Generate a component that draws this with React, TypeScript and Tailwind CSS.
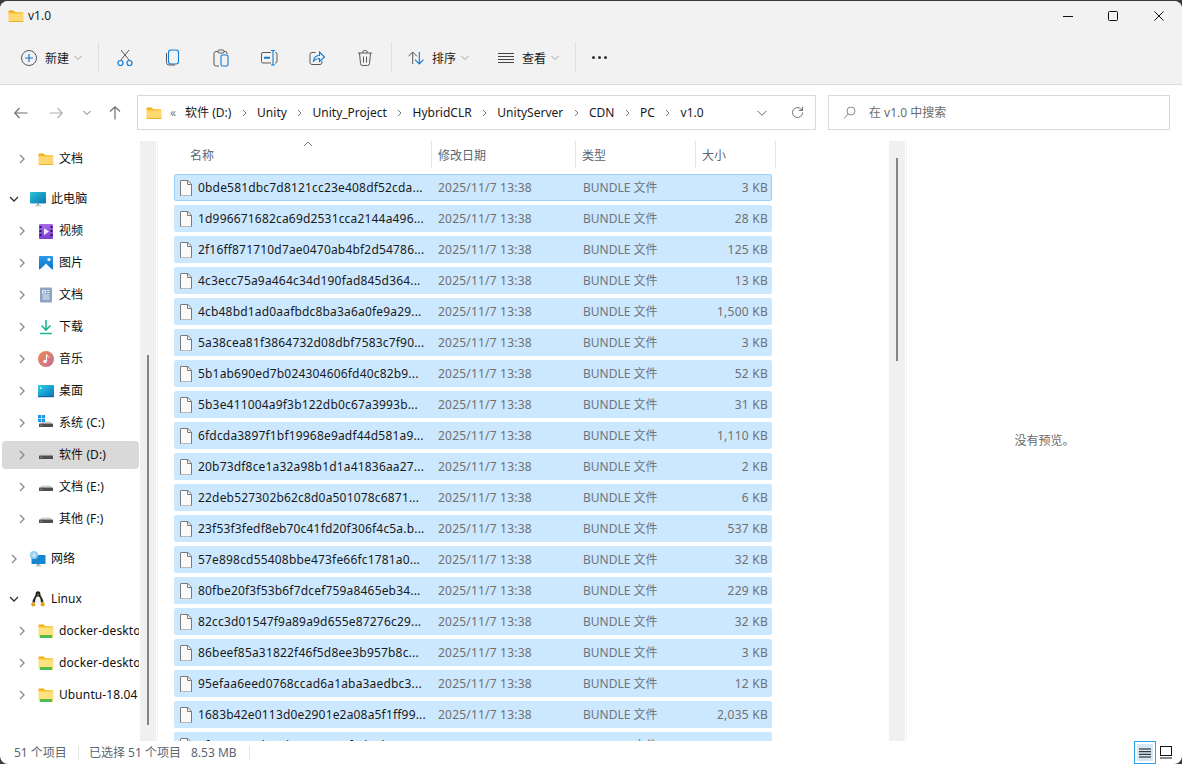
import { ReactNode } from 'react'

// file list rows
const files = [
  ['0bde581dbc7d8121cc23e408df52cda...', '3 KB'],
  ['1d996671682ca69d2531cca2144a496...', '28 KB'],
  ['2f16ff871710d7ae0470ab4bf2d54786...', '125 KB'],
  ['4c3ecc75a9a464c34d190fad845d364...', '13 KB'],
  ['4cb48bd1ad0aafbdc8ba3a6a0fe9a29...', '1,500 KB'],
  ['5a38cea81f3864732d08dbf7583c7f90...', '3 KB'],
  ['5b1ab690ed7b024304606fd40c82b9...', '52 KB'],
  ['5b3e411004a9f3b122db0c67a3993b...', '31 KB'],
  ['6fdcda3897f1bf19968e9adf44d581a9...', '1,110 KB'],
  ['20b73df8ce1a32a98b1d1a41836aa27...', '2 KB'],
  ['22deb527302b62c8d0a501078c6871...', '6 KB'],
  ['23f53f3fedf8eb70c41fd20f306f4c5a.b...', '537 KB'],
  ['57e898cd55408bbe473fe66fc1781a0...', '32 KB'],
  ['80fbe20f3f53b6f7dcef759a8465eb34...', '229 KB'],
  ['82cc3d01547f9a89a9d655e87276c29...', '32 KB'],
  ['86beef85a31822f46f5d8ee3b957b8c...', '3 KB'],
  ['95efaa6eed0768ccad6a1aba3aedbc3...', '12 KB'],
  ['1683b42e0113d0e2901e2a08a5f1ff99...', '2,035 KB'],
  ['1f4a90c27d3e5b16a8c04ef7d92b3c1...', '48 KB'],
]

const crumbs = ['软件 (D:)', 'Unity', 'Unity_Project', 'HybridCLR', 'UnityServer', 'CDN', 'PC', 'v1.0']

function FolderIcon({ size = 16 }: { size?: number }) {
  return (
    <svg width={size} height={size} viewBox="0 0 16 16" className="shrink-0">
      <path d="M0.500 3.500a1 1 0 0 1 1-1h4l1.600 1.500h-6.600z" fill="#f0a90f" />
      <path d="M0.500 4.500h14a1 1 0 0 1 1 1v7.500a1 1 0 0 1-1 1h-13a1 1 0 0 1-1-1z" fill="#fdd871" />
      <path d="M0.500 13h15v0.200a1 1 0 0 1-1 0.800h-13a1 1 0 0 1-1-1z" fill="#eeb02c" />
      <path d="M0.500 4h6.600l8 0.600v1h-14.600z" fill="#f8bd2d" />
    </svg>
  )
}

function WslFolderIcon() {
  return (
    <svg width="16" height="16" viewBox="0 0 16 16" className="shrink-0">
      <path d="M0.500 2.500a1 1 0 0 1 1-1h4l1.600 1.500h-6.600z" fill="#f0a90f" />
      <path d="M0.500 3.500h14a1 1 0 0 1 1 1v9.500a1 1 0 0 1-1 1h-13a1 1 0 0 1-1-1z" fill="#fde27f" />
      <path d="M0.500 3h6.600l8 0.600v1h-14.600z" fill="#f8bd2d" />
      <rect x="2" y="12" width="12" height="3" fill="#4fbf4a" />
    </svg>
  )
}

function NavChevron({ open }: { open?: boolean }) {
  return (
    <svg width="10" height="10" viewBox="0 0 10 10" className="shrink-0">
      {open ? (
        <path d="M1 3l4 4 4-4" fill="none" stroke="#333" strokeWidth="1.300" />
      ) : (
        <path d="M3 1l4 4-4 4" fill="none" stroke="#8a8a8a" strokeWidth="1.300" />
      )}
    </svg>
  )
}

function DownCaret({ color = '#a0a0a0' }: { color?: string }) {
  return (
    <svg width="8" height="6" viewBox="0 0 8 6" className="shrink-0">
      <path d="M0.500 1l3.500 3.500 3.500-3.500" fill="none" stroke={color} strokeWidth="1" />
    </svg>
  )
}

function DriveIcon({ windows }: { windows?: boolean }) {
  return (
    <svg width="16" height="16" viewBox="0 0 16 16" className="shrink-0">
      <path d="M2 8.500l1.500-2h9l1.500 2z" fill="#d0d0d0" />
      <rect x="1" y="8.500" width="14" height="3.500" rx="0.500" fill="#4e4e4e" />
      <rect x="2.500" y="9.800" width="1.500" height="1" fill="#5be05b" />
      {windows && (
        <g fill="#1b93e8">
          <rect x="0" y="0" width="3.200" height="3.200" />
          <rect x="3.800" y="0" width="3.200" height="3.200" />
          <rect x="0" y="3.800" width="3.200" height="3.200" />
          <rect x="3.800" y="3.800" width="3.200" height="3.200" />
        </g>
      )}
    </svg>
  )
}

function VideoIcon() {
  return (
    <svg width="16" height="16" viewBox="0 0 16 16" className="shrink-0">
      <defs>
        <linearGradient id="vid" x1="0" y1="0" x2="0" y2="1">
          <stop offset="0" stopColor="#a767e8" />
          <stop offset="1" stopColor="#7a3fd0" />
        </linearGradient>
      </defs>
      <rect x="1" y="1" width="14" height="15" rx="1" fill="url(#vid)" />
      <rect x="1.500" y="3" width="2" height="2" fill="#2c1466" />
      <rect x="1.500" y="7" width="2" height="2" fill="#2c1466" />
      <rect x="1.500" y="11" width="2" height="2" fill="#2c1466" />
      <rect x="12.500" y="3" width="2" height="2" fill="#2c1466" />
      <rect x="12.500" y="7" width="2" height="2" fill="#2c1466" />
      <rect x="12.500" y="11" width="2" height="2" fill="#2c1466" />
      <path d="M6 5l5 3.500-5 3.500z" fill="#f1e6ff" />
    </svg>
  )
}

function PictureIcon() {
  return (
    <svg width="16" height="16" viewBox="0 0 16 16" className="shrink-0">
      <defs>
        <linearGradient id="pic" x1="0" y1="0" x2="0" y2="1">
          <stop offset="0" stopColor="#2b9bea" />
          <stop offset="1" stopColor="#0b6fc4" />
        </linearGradient>
      </defs>
      <rect x="1" y="1" width="14" height="14" rx="1" fill="url(#pic)" />
      <circle cx="11" cy="4.500" r="1.600" fill="#fff" />
      <path d="M1 15l4-3.500 3-3 3 3 4 3.500z" fill="#f2f8fd" />
    </svg>
  )
}

function DocIcon() {
  return (
    <svg width="16" height="16" viewBox="0 0 16 16" className="shrink-0">
      <rect x="2" y="0.500" width="12" height="15" rx="1" fill="#8ba4c4" />
      <path d="M4.500 3.500h3v2.500h-3zM9 3.500h2.500M9 5.500h2.500M4.500 8h7M4.500 10h7M4.500 12h7" stroke="#fff" fill="none" strokeWidth="0.800" />
    </svg>
  )
}

function DownloadIcon() {
  return (
    <svg width="16" height="16" viewBox="0 0 16 16" className="shrink-0">
      <path d="M8 1v9M3.500 6.500l4.500 4.500 4.500-4.500" fill="none" stroke="#1fb58f" strokeWidth="1.600" />
      <path d="M2 14.500h12" stroke="#1fb58f" strokeWidth="1.600" />
    </svg>
  )
}

function MusicIcon() {
  return (
    <svg width="16" height="16" viewBox="0 0 16 16" className="shrink-0">
      <defs>
        <linearGradient id="mus" x1="0" y1="0" x2="1" y2="1">
          <stop offset="0" stopColor="#ee8a4f" />
          <stop offset="1" stopColor="#c66a9a" />
        </linearGradient>
      </defs>
      <circle cx="8" cy="8" r="8" fill="url(#mus)" />
      <path d="M8.500 3.500v6.500" stroke="#fff" strokeWidth="1.200" />
      <path d="M8.500 3.500c0.500 1.500 2 1.800 2.500 3" stroke="#fff" strokeWidth="1" fill="none" />
      <circle cx="7" cy="10.500" r="1.800" fill="#fff" />
    </svg>
  )
}

function DesktopIcon() {
  return (
    <svg width="16" height="16" viewBox="0 0 16 16" className="shrink-0">
      <defs>
        <linearGradient id="desk" x1="0" y1="0" x2="1" y2="1">
          <stop offset="0" stopColor="#2ad0e0" />
          <stop offset="1" stopColor="#0a74c4" />
        </linearGradient>
      </defs>
      <rect x="0" y="2" width="16" height="12" rx="1" fill="url(#desk)" />
      <rect x="2" y="4.500" width="1.500" height="1.500" fill="#fff" />
      <rect x="0" y="13" width="16" height="1.200" fill="#155d94" />
    </svg>
  )
}

function PcIcon() {
  return (
    <svg width="16" height="16" viewBox="0 0 16 16" className="shrink-0">
      <defs>
        <linearGradient id="pc" x1="0" y1="0" x2="1" y2="1">
          <stop offset="0" stopColor="#2ac3d8" />
          <stop offset="1" stopColor="#0c74b8" />
        </linearGradient>
      </defs>
      <rect x="0" y="1" width="16" height="11.500" rx="1" fill="url(#pc)" />
      <rect x="7" y="12.500" width="2" height="1.800" fill="#9a9a9a" />
      <rect x="5" y="14.300" width="6" height="1" fill="#b8b8b8" />
    </svg>
  )
}

function NetworkIcon() {
  return (
    <svg width="16" height="16" viewBox="0 0 16 16" className="shrink-0">
      <rect x="1.500" y="4" width="14" height="9" rx="0.800" fill="#1686d0" />
      <rect x="7" y="13" width="2.500" height="1.500" fill="#9a9a9a" />
      <rect x="5.500" y="14.500" width="5.500" height="1" fill="#b8b8b8" />
      <circle cx="4" cy="4" r="4" fill="#8cc7ee" />
      <path d="M1 4h6M4 0.500v7M2 1.500c1.500 1.500 2.500 3 0 5M6 1.500c-1.500 1.500-2.500 3 0 5" stroke="#f4fbff" strokeWidth="0.500" fill="none" />
    </svg>
  )
}

function TuxIcon() {
  return (
    <svg width="16" height="16" viewBox="0 0 16 16" className="shrink-0">
      <path d="M8 0.200c-1.900 0-2.500 1.500-2.400 3.200 0 1.500-3 4.200-3.200 8.100h11.200c-0.200-3.900-3.200-6.600-3.200-8.100 0.100-1.700-0.500-3.200-2.400-3.200z" fill="#222" />
      <path d="M8 5.200c-1.700 0-2.900 3-2.900 5.800 0 1.300 1.300 2.200 2.900 2.200s2.900-0.900 2.900-2.200c0-2.800-1.200-5.800-2.900-5.800z" fill="#f6f6f6" />
      <path d="M6.800 3.300h2.400l-1.200 1.300z" fill="#e8a317" />
      <path d="M0.800 13.200l3-2.700 2 3.700-3.200 1.600zM15.200 13.200l-3-2.700-2 3.700 3.200 1.600z" fill="#dda11f" />
    </svg>
  )
}

function FileIcon() {
  return (
    <svg width="12" height="16" viewBox="0 0 12 16" className="shrink-0">
      <path d="M0.500 1a0.500 0.500 0 0 1 0.500-0.500h6.800l3.700 3.700v11.300a0.500 0.500 0 0 1-0.500 0.500h-10a0.500 0.500 0 0 1-0.500-0.500z" fill="#fafafa" stroke="#7a7a7a" strokeWidth="1" />
      <path d="M7.500 0.500v4h4" fill="none" stroke="#7a7a7a" strokeWidth="1" />
    </svg>
  )
}

function ToolIcon({ children }: { children: ReactNode }) {
  return (
    <svg width="20" height="20" viewBox="0 0 20 20" fill="none" className="shrink-0">
      {children}
    </svg>
  )
}

const blue = '#0f7ad4'
const ink = '#5a5a5a'

function NavRow({ level, open, selected, icon, label }: { level: 0 | 1; open?: boolean; selected?: boolean; icon: ReactNode; label: string }) {
  return (
    <div className={`flex h-7 w-[137px] shrink-0 ml-[2px] items-center rounded overflow-hidden ${selected ? 'bg-[#d9d9d9]' : ''} ${level === 1 ? 'pl-[15px]' : 'pl-[7px]'}`}>
      <NavChevron open={open} />
      <span className="ml-[11px] flex w-4 shrink-0 justify-center">{icon}</span>
      <span className="ml-[5px] whitespace-nowrap text-[12px] tracking-[0.1px] text-[#111]">{label}</span>
    </div>
  )
}

function Sidebar() {
  return (
    <nav className="flex h-full w-[140px] shrink-0 flex-col overflow-hidden pt-[4px]">
      <NavRow level={1} icon={<FolderIcon />} label="文档" />
      <div className="mt-3">
        <NavRow level={0} open icon={<PcIcon />} label="此电脑" />
      </div>
      <div className="mt-1 flex flex-col gap-1">
        <NavRow level={1} icon={<VideoIcon />} label="视频" />
        <NavRow level={1} icon={<PictureIcon />} label="图片" />
        <NavRow level={1} icon={<DocIcon />} label="文档" />
        <NavRow level={1} icon={<DownloadIcon />} label="下载" />
        <NavRow level={1} icon={<MusicIcon />} label="音乐" />
        <NavRow level={1} icon={<DesktopIcon />} label="桌面" />
        <NavRow level={1} icon={<DriveIcon windows />} label="系统 (C:)" />
        <NavRow level={1} selected icon={<DriveIcon />} label="软件 (D:)" />
        <NavRow level={1} icon={<DriveIcon />} label="文档 (E:)" />
        <NavRow level={1} icon={<DriveIcon />} label="其他 (F:)" />
      </div>
      <div className="mt-3">
        <NavRow level={0} icon={<NetworkIcon />} label="网络" />
      </div>
      <div className="mt-3">
        <NavRow level={0} open icon={<TuxIcon />} label="Linux" />
      </div>
      <div className="mt-1 flex flex-col gap-1">
        <NavRow level={1} icon={<WslFolderIcon />} label="docker-desktop" />
        <NavRow level={1} icon={<WslFolderIcon />} label="docker-desktop-data" />
        <NavRow level={1} icon={<WslFolderIcon />} label="Ubuntu-18.04" />
      </div>
    </nav>
  )
}

function Toolbar() {
  return (
    <div className="flex h-[53px] items-center bg-[#f2f2f2] py-[1px] text-[12px] text-[#1a1a1a]">
      <div className="flex w-[98px] items-center pl-[19px]">
        <ToolIcon>
          <circle cx="10" cy="10" r="7.500" stroke={ink} strokeWidth="1" />
          <path d="M10 6v8M6 10h8" stroke={blue} strokeWidth="1.200" />
        </ToolIcon>
        <span className="ml-[6px] mt-[2px]">新建</span>
        <span className="ml-[5px]"><DownCaret /></span>
      </div>
      <div className="h-[31px] w-px bg-[#dedede]" />
      <div className="flex">
        <div className="ml-[2px] flex w-[48px] justify-center">
          <ToolIcon>
            <path d="M5.500 12.500L14 2M14.500 12.500L6 2" stroke={ink} strokeWidth="1" />
            <circle cx="5.500" cy="15" r="2.500" stroke={blue} strokeWidth="1.200" />
            <circle cx="14.500" cy="15" r="2.500" stroke={blue} strokeWidth="1.200" />
          </ToolIcon>
        </div>
        <div className="flex w-[48px] justify-center">
          <ToolIcon>
            <rect x="5.500" y="2" width="10" height="14" rx="2.500" stroke={blue} strokeWidth="1.100" />
            <path d="M3.500 5v9.500a2.500 2.500 0 0 0 2.500 2.500h6" stroke={ink} strokeWidth="1" />
          </ToolIcon>
        </div>
        <div className="flex w-[48px] justify-center">
          <ToolIcon>
            <path d="M7 3.500h-2a2 2 0 0 0-2 2v10.500a2 2 0 0 0 2 2h3M13 3.500h1.500a1.500 1.500 0 0 1 1.500 1.500v1" stroke={ink} strokeWidth="1" />
            <rect x="7" y="2" width="6" height="3" rx="1" stroke={ink} strokeWidth="1" />
            <rect x="10" y="7" width="7" height="11" rx="1.500" stroke={blue} strokeWidth="1.100" />
          </ToolIcon>
        </div>
        <div className="flex w-[48px] justify-center">
          <ToolIcon>
            <path d="M12 4.500h-8a1.500 1.500 0 0 0-1.500 1.500v7.500a1.500 1.500 0 0 0 1.500 1.500h8M16 4.500h.500a1.500 1.500 0 0 1 1.500 1.500v7.500a1.500 1.500 0 0 1-1.500 1.500h-.500" stroke={ink} strokeWidth="1" />
            <path d="M14 2.500v14.500M12 2.500h4M12 17h4" stroke={blue} strokeWidth="1.100" />
            <path d="M5 9.800h6" stroke={blue} strokeWidth="2" />
          </ToolIcon>
        </div>
        <div className="flex w-[48px] justify-center">
          <ToolIcon>
            <path d="M8.500 4.500h-3.500a2 2 0 0 0-2 2v8a2 2 0 0 0 2 2h8a2 2 0 0 0 2-2v-1.500" stroke={ink} strokeWidth="1" />
            <path d="M6.500 13c0.500-3.500 3-5.500 6-5.500v-3.500l5 5-5 4.500v-3c-2.500 0-4.200 0.800-6 2.500z" stroke={blue} strokeWidth="1.100" />
          </ToolIcon>
        </div>
        <div className="flex w-[48px] justify-center">
          <ToolIcon>
            <path d="M3 5h14M7.800 5v-1a1.500 1.500 0 0 1 1.500-1.500h1.400a1.500 1.500 0 0 1 1.500 1.500v1M4.500 5l1 10.500a2 2 0 0 0 2 2h5a2 2 0 0 0 2-2l1-10.500M8.500 8.500v6M11.500 8.500v6" stroke={ink} strokeWidth="1" />
          </ToolIcon>
        </div>
      </div>
      <div className="ml-[2px] h-[31px] w-px bg-[#dedede]" />
      <div className="flex items-center pl-[14px]">
        <ToolIcon>
          <path d="M6.700 16V4M2.500 8.300l4.200-4.300 4.200 4.300" stroke={ink} strokeWidth="1" />
          <path d="M13.300 4v12M9 11.700l4.300 4.300 4.200-4.300" stroke={blue} strokeWidth="1.100" />
        </ToolIcon>
        <span className="ml-[6px] mt-[2px]">排序</span>
        <span className="ml-[5px]"><DownCaret /></span>
      </div>
      <div className="ml-[29px] flex items-center">
        <svg width="16" height="12" viewBox="0 0 16 12" className="shrink-0">
          <path d="M0 1.500h16M0 4.500h16M0 7.500h16M0 10.500h16" stroke="#444" strokeWidth="1" />
        </svg>
        <span className="ml-[8px] mt-[2px]">查看</span>
        <span className="ml-[5px]"><DownCaret /></span>
      </div>
      <div className="ml-[16px] h-[31px] w-px bg-[#dedede]" />
      <div className="ml-[16px] flex items-center gap-[3px]">
        <span className="size-[3px] rounded-full bg-[#333]" />
        <span className="size-[3px] rounded-full bg-[#333]" />
        <span className="size-[3px] rounded-full bg-[#333]" />
      </div>
    </div>
  )
}

function AddressRow() {
  return (
    <div className="flex h-[56px] items-center bg-white pb-[1px]">
      <div className="flex w-[137px] shrink-0 items-center pl-[14px]">
        <svg width="14" height="12" viewBox="0 0 14 12">
          <path d="M13.500 6H1M5.500 1L0.800 6l4.700 5" fill="none" stroke="#6e6e6e" strokeWidth="1.200" />
        </svg>
        <svg width="14" height="12" viewBox="0 0 14 12" className="ml-[21px]">
          <path d="M0.500 6H13M8.500 1l4.700 5-4.700 5" fill="none" stroke="#b0b0b0" strokeWidth="1.200" />
        </svg>
        <span className="ml-[20px]"><DownCaret color="#6e6e6e" /></span>
        <svg width="12" height="14" viewBox="0 0 12 14" className="ml-[18px]">
          <path d="M6 13.500V1M1 5.500L6 .8l5 4.700" fill="none" stroke="#6e6e6e" strokeWidth="1.200" />
        </svg>
      </div>
      <div className="flex h-[35px] w-[679px] shrink-0 items-center border border-[#d9d9d9] pl-[8px] text-[12px] text-[#1a1a1a]">
        <FolderIcon />
        <span className="ml-[8px] mr-[9px] text-[#777]">«</span>
        <div className="flex items-center gap-[10.35px]">
          {crumbs.map((c, i) => (
            <div key={c} className="flex items-center gap-[10.35px]">
              <span className="whitespace-nowrap">{c}</span>
              {i < crumbs.length - 1 && (
                <svg width="5" height="8" viewBox="0 0 5 8"><path d="M1 1l3 3-3 3" fill="none" stroke="#777" strokeWidth="1" /></svg>
              )}
            </div>
          ))}
        </div>
        <div className="ml-auto flex items-center pr-[11px]">
          <svg width="10" height="6" viewBox="0 0 10 6" className="mr-[24px]"><path d="M0.500 0.800l4.500 4.500 4.500-4.500" fill="none" stroke="#666" strokeWidth="1" /></svg>
          <svg width="13" height="13" viewBox="0 0 13 13">
            <path d="M11.500 6.500a5 5 0 1 1-1.500-3.500l1.500 1.500M11.500 0.800v3.700h-3.700" fill="none" stroke="#707070" strokeWidth="1" />
          </svg>
        </div>
      </div>
      <div className="ml-[12px] flex h-[35px] w-[342px] shrink-0 items-center border border-[#d9d9d9] pl-[14px] text-[12px] text-[#6b6b6b]">
        <svg width="13" height="13" viewBox="0 0 13 13">
          <circle cx="8" cy="5" r="4" fill="none" stroke="#8a8a8a" strokeWidth="1" />
          <path d="M5 8l-4 4.500" stroke="#a08070" strokeWidth="1" />
        </svg>
        <span className="ml-[13px]">在 v1.0 中搜索</span>
      </div>
    </div>
  )
}

function FileList() {
  return (
    <div className="relative h-full w-[731px] shrink-0 overflow-hidden">
      <div className="flex h-[27px] pl-[26px] text-[12px] text-[#5b6672]">
        <div className="flex w-[248px] items-center border-r border-[#e5e5e5] pl-[6px] pt-[2px]">名称</div>
        <div className="flex w-[144px] items-center border-r border-[#e5e5e5] pl-[6px] pt-[2px]">修改日期</div>
        <div className="flex w-[120px] items-center border-r border-[#e5e5e5] pl-[6px] pt-[2px]">类型</div>
        <div className="flex w-[80px] items-center border-r border-[#e5e5e5] pl-[6px] pt-[2px]">大小</div>
      </div>
      {/* sort arrow sits on top of the header */}
      <svg width="10" height="6" viewBox="0 0 10 6" className="absolute left-[145px] top-0">
        <path d="M1 5l4-4 4 4" fill="none" stroke="#777" strokeWidth="1" />
      </svg>
      <div className="ml-[16px] mt-[6px] flex w-[598px] flex-col gap-1">
        {files.map(([name, size], i) => (
          <div
            key={name}
            className={`flex h-[27px] shrink-0 items-center rounded-[2px] bg-[#cce8ff] text-[12px] ${i === 0 ? 'border border-[#99d1ff]' : 'border border-[#cce8ff]'}`}
          >
            <span className="ml-[5px]"><FileIcon /></span>
            <span className="ml-[6px] w-[240px] shrink-0 whitespace-nowrap tracking-[0.18px] text-[#1a1a1a]">{name}</span>
            <span className="w-[145px] shrink-0 tracking-[0.2px] text-[#707070]">2025/11/7 13:38</span>
            <span className="w-[100px] shrink-0 text-[#6c7480]">BUNDLE 文件</span>
            <span className="flex-1 pr-[3px] text-right tracking-[0.25px] text-[#707070]">{size}</span>
          </div>
        ))}
      </div>
    </div>
  )
}

export default function App() {
  return (
    <div
      className="h-screen w-full overflow-hidden bg-[#3a3a3a] pt-px"
      style={{ fontFamily: '"Noto Sans", "Noto Sans CJK SC", sans-serif' }}
    >
      <div className="flex h-[763px] flex-col overflow-hidden rounded-[8px] bg-white">
        {/* title bar */}
        <div className="flex h-[30px] shrink-0 items-center bg-[#f2f2f2] pl-[8px]">
          <FolderIcon />
          <span className="ml-[4px] text-[12px] text-[#1a1a1a]">v1.0</span>
          <div className="ml-auto flex items-center pr-[18px]">
            <svg width="10" height="10" viewBox="0 0 10 10"><path d="M0 5.500h10" stroke="#111" strokeWidth="1" /></svg>
            <svg width="10" height="10" viewBox="0 0 10 10" className="ml-[35px]"><rect x="0.500" y="0.500" width="9" height="9" rx="1" fill="none" stroke="#111" strokeWidth="1" /></svg>
            <svg width="10" height="10" viewBox="0 0 10 10" className="ml-[36px]"><path d="M0.500 0.500l9 9M9.500 0.500l-9 9" stroke="#111" strokeWidth="1" /></svg>
          </div>
        </div>
        <Toolbar />
        <div className="h-px shrink-0 bg-[#dcdcdc]" />
        <AddressRow />
        {/* main area */}
        <div className="flex h-[600px] shrink-0">
          <Sidebar />
          <div className="h-full w-4 shrink-0 bg-[#f0f0f0] pl-[7px] pt-[214px]">
            <div className="h-[370px] w-[2px] bg-[#858585]" />
          </div>
          <div className="h-full w-[2px] shrink-0 border-r border-[#f2f2f2]" />
          <FileList />
          <div className="h-full w-4 shrink-0 bg-[#f0f0f0] pl-[7px] pt-[17px]">
            <div className="h-[203px] w-[2px] bg-[#858585]" />
          </div>
          <div className="ml-px flex h-full flex-1 items-center justify-center border-l border-[#f2f2f2] text-[12px] text-[#6b6b6b]">
            没有预览。
          </div>
        </div>
        {/* status bar */}
        <div className="flex h-[23px] flex-1 items-center text-[12px] text-[#5b6672]">
          <span className="ml-[14px] w-[64px]">51 个项目</span>
          <span className="h-[14px] w-px bg-[#e5e5e5]" />
          <span className="ml-[10px] w-[102px]">已选择 51 个项目</span>
          <span className="w-[58px]">8.53 MB</span>
          <span className="h-[14px] w-px bg-[#e5e5e5]" />
          <div className="ml-auto flex items-center pr-[6px]">
            <div className="h-[23px] w-[22px] border border-[#2ba4e0] p-[2px]">
              <div className="flex size-full items-center justify-center bg-[#d5e8f6]">
                <svg width="12" height="10" viewBox="0 0 12 10"><path d="M0 1h12M0 3.700h12M0 6.300h12M0 9h12" stroke="#111" strokeWidth="1" /></svg>
              </div>
            </div>
            <div className="flex h-[23px] w-[20px] items-center justify-center">
              <svg width="12" height="13" viewBox="0 0 12 13"><rect x="0.500" y="0.500" width="11" height="9" fill="none" stroke="#111" strokeWidth="1" /><path d="M0 12h12" stroke="#111" strokeWidth="1" /></svg>
            </div>
          </div>
        </div>
      </div>
    </div>
  )
}
